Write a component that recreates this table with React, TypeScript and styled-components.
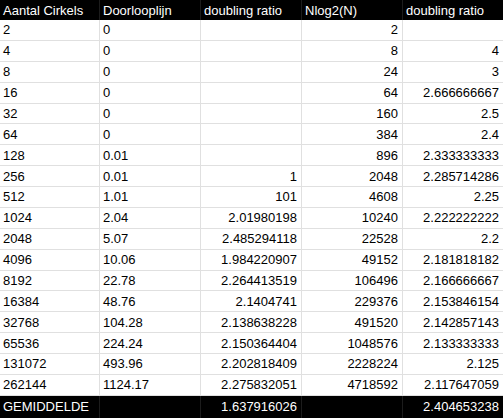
import React from "react";
import styled, { createGlobalStyle } from "styled-components";

const Global = createGlobalStyle`
  html, body { margin: 0; padding: 0; background: #ffffff; }
  body { font-family: "Liberation Sans", Arial, sans-serif; }
`;

const Sheet = styled.div`
  width: 503px;
  height: 418px;
  display: grid;
  grid-template-columns: 100px 101px 101px 101px 100px;
  grid-template-rows: 20px repeat(18, 20.89px) 22px;
  font-size: 13px;
  overflow: hidden;
`;

const Cell = styled.div<{ $align?: "left" | "right"; $dark?: boolean; $last?: boolean }>`
  display: flex;
  align-items: center;
  justify-content: ${(p) => (p.$align === "right" ? "flex-end" : "flex-start")};
  padding: 0 4px 0 3px;
  box-sizing: border-box;
  white-space: nowrap;
  overflow: hidden;
  background: ${(p) => (p.$dark ? "#000000" : "#ffffff")};
  color: ${(p) => (p.$dark ? "#ffffff" : "#000000")};
  border-right: ${(p) => (p.$last ? "none" : p.$dark ? "1px solid #1c1c1c" : "1px solid #e0e0e0")};
  border-bottom: ${(p) => (p.$dark ? "none" : "1px solid #e0e0e0")};
`;

const headers = ["Aantal Cirkels", "Doorlooplijn", "doubling ratio", "Nlog2(N)", "doubling ratio"];

const rows: string[][] = [
  ["2", "0", "", "2", ""],
  ["4", "0", "", "8", "4"],
  ["8", "0", "", "24", "3"],
  ["16", "0", "", "64", "2.666666667"],
  ["32", "0", "", "160", "2.5"],
  ["64", "0", "", "384", "2.4"],
  ["128", "0.01", "", "896", "2.333333333"],
  ["256", "0.01", "1", "2048", "2.285714286"],
  ["512", "1.01", "101", "4608", "2.25"],
  ["1024", "2.04", "2.01980198", "10240", "2.222222222"],
  ["2048", "5.07", "2.485294118", "22528", "2.2"],
  ["4096", "10.06", "1.984220907", "49152", "2.181818182"],
  ["8192", "22.78", "2.264413519", "106496", "2.166666667"],
  ["16384", "48.76", "2.1404741", "229376", "2.153846154"],
  ["32768", "104.28", "2.138638228", "491520", "2.142857143"],
  ["65536", "224.24", "2.150364404", "1048576", "2.133333333"],
  ["131072", "493.96", "2.202818409", "2228224", "2.125"],
  ["262144", "1124.17", "2.275832051", "4718592", "2.117647059"],
];

const footer = ["GEMIDDELDE", "", "1.637916026", "", "2.404653238"];

export default function App() {
  return (
    <>
      <Global />
      <Sheet>
        {headers.map((h, i) => (
          <Cell key={"h" + i} $dark $last={i === 4}>
            {h}
          </Cell>
        ))}
        {rows.map((r, ri) =>
          r.map((v, ci) => (
            <Cell key={ri + "-" + ci} $align={ci < 2 ? "left" : "right"} $last={ci === 4}>
              {v}
            </Cell>
          ))
        )}
        {footer.map((v, i) => (
          <Cell key={"f" + i} $dark $align={i === 0 ? "left" : "right"} $last={i === 4}>
            {v}
          </Cell>
        ))}
      </Sheet>
    </>
  );
}
